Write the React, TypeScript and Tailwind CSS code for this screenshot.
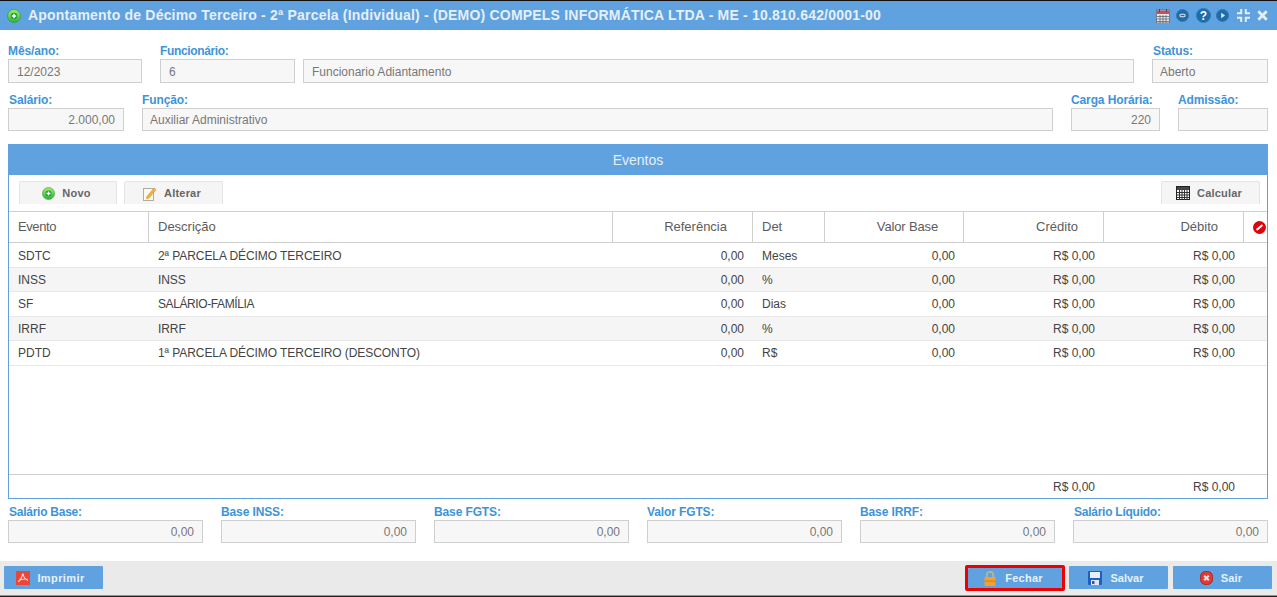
import type { ReactNode } from "react";

const rows = [
  ["SDTC", "2ª PARCELA DÉCIMO TERCEIRO", "0,00", "Meses", "0,00", "R$ 0,00", "R$ 0,00"],
  ["INSS", "INSS", "0,00", "%", "0,00", "R$ 0,00", "R$ 0,00"],
  ["SF", "SALÁRIO-FAMÍLIA", "0,00", "Dias", "0,00", "R$ 0,00", "R$ 0,00"],
  ["IRRF", "IRRF", "0,00", "%", "0,00", "R$ 0,00", "R$ 0,00"],
  ["PDTD", "1ª PARCELA DÉCIMO TERCEIRO (DESCONTO)", "0,00", "R$", "0,00", "R$ 0,00", "R$ 0,00"],
];

const bases = ["Salário Base:", "Base INSS:", "Base FGTS:", "Valor FGTS:", "Base IRRF:", "Salário Líquido:"];

function GreenPlus({ id, size = 14 }: { id: string; size?: number }) {
  return (
    <svg width={size} height={size} viewBox="0 0 14 14" className="shrink-0">
      <defs>
        <linearGradient id={id} x1="0" y1="0" x2="0" y2="1">
          <stop offset="0%" stopColor="#a4ec6c" />
          <stop offset="100%" stopColor="#2cb534" />
        </linearGradient>
      </defs>
      <circle cx="7" cy="7" r="6.5" fill={`url(#${id})`} stroke="#2b9a30" strokeWidth="0.6" />
      <circle cx="7" cy="7" r="3.200" fill="#149a3c" />
      <path d="M7 4.800v4.400M4.800 7h4.400" stroke="#fff" strokeWidth="1.500" />
    </svg>
  );
}

function Calendar() {
  return (
    <svg width="14" height="14" viewBox="0 0 14 14" className="shrink-0">
      <rect x="0.500" y="1" width="13" height="13" fill="#e8e8e8" stroke="#5a5f66" strokeWidth="0.700" />
      <rect x="1" y="1.500" width="12" height="3.500" fill="#bd5166" />
      <path d="M3.500 0v3M10.500 0v3" stroke="#4a4a4a" />
      <path d="M1 7.500h12M1 10h12M1 12.500h12M4 6v8M7 6v8M10 6v8" stroke="#5d6772" strokeWidth="0.800" />
    </svg>
  );
}

function RoundIcon({ size, children }: { size: number; children: ReactNode }) {
  return (
    <svg width={size} height={size} viewBox="0 0 15 15" className="shrink-0">
      <circle cx="7.5" cy="7.5" r="7" fill="#1f6ca8" stroke="#2a7cb8" />
      {children}
    </svg>
  );
}

function Pdf() {
  return (
    <svg width="14" height="14" viewBox="0 0 14 14" className="shrink-0">
      <rect width="14" height="14" fill="#e8473a" />
      <path d="M7 2.500c-.6 2.500-2.200 6-4.700 8.500M7 2.500c.4 3 2.300 6 5 7M3 9.500c2.500-1.300 5.500-1.800 8.500-1.300" fill="none" stroke="#fbd9d5" strokeWidth="1.100" />
    </svg>
  );
}

function Lock() {
  return (
    <svg width="12" height="15" viewBox="0 0 12 15" className="shrink-0">
      <path d="M2.800 7V4a3.200 3.200 0 0 1 6.400 0v3" fill="none" stroke="#b8b58e" strokeWidth="1.800" />
      <rect x="0.500" y="6" width="11" height="9" fill="#f2a02e" />
      <rect x="0.500" y="9.500" width="11" height="1.500" fill="#e08a1c" />
    </svg>
  );
}

function Floppy() {
  return (
    <svg width="14" height="14" viewBox="0 0 14 14" className="shrink-0">
      <rect width="14" height="14" rx="1" fill="#1f5fc0" />
      <rect x="2" y="1" width="10" height="6" fill="#e9eff8" />
      <rect x="3" y="9" width="8" height="5" fill="#dfe7f2" />
      <rect x="4" y="10" width="2.500" height="3" fill="#1f5fc0" />
    </svg>
  );
}

function RedClose() {
  return (
    <svg width="13" height="14" viewBox="0 0 13 14" className="shrink-0">
      <rect x="0.500" y="0.500" width="12" height="13" rx="5" fill="#de3a36" stroke="#a92a26" />
      <path d="M4.200 4.700l4.600 4.600M8.800 4.700l-4.600 4.600" stroke="#fbe3e2" strokeWidth="2" />
    </svg>
  );
}

function Pencil() {
  return (
    <svg width="14" height="15" viewBox="0 0 14 15" className="shrink-0">
      <rect x="0.500" y="2.500" width="10" height="12" fill="#fbf8ef" stroke="#b0aca0" />
      <path d="M4 10.500L11 2l2 1.700L6 12l-2.500.8z" fill="#f0b23c" stroke="#c98a1e" strokeWidth="0.500" />
    </svg>
  );
}

function Calc() {
  return (
    <svg width="14" height="14" viewBox="0 0 14 14" className="shrink-0">
      <rect x="0.500" y="0.500" width="13" height="13" fill="#fff" stroke="#222" />
      <rect x="1" y="1" width="12" height="3" fill="#444" />
      <path d="M1 6.500h12M1 9h12M1 11.500h12M3.500 4v10M6 4v10M8.500 4v10M11 4v10" stroke="#333" strokeWidth="1" />
    </svg>
  );
}

type FieldProps = {
  label?: string;
  labelClass?: string;
  value: string;
  right?: boolean;
  className?: string;
  boxClass?: string;
};

function Field({ label, labelClass = "", value, right, className, boxClass = "h-[23px] leading-[22px] px-[8px]" }: FieldProps) {
  return (
    <div className={className}>
      <div className={`h-[15px] text-[12px] leading-[15px] font-bold tracking-[-0.12px] text-[#3d94d8] whitespace-nowrap ${labelClass}`}>
        {label ?? "\u00a0"}
      </div>
      <div className={`border border-[#cfcfcf] bg-[#f7f7f7] text-[12px] text-[#777] ${right ? "text-right" : ""} ${boxClass}`}>
        {value}
      </div>
    </div>
  );
}

function ToolButton({ icon, label, className }: { icon: ReactNode; label: string; className: string }) {
  return (
    <button className={`h-[23px] flex items-center justify-center gap-[7px] pr-[3px] bg-[#f5f5f5] border border-b-0 border-[#e4e4e4] rounded-t-[2px] text-[11px] font-bold tracking-[0.2px] text-[#666] ${className}`}>
      {icon}
      {label}
    </button>
  );
}

function FootButton({ icon, label, className }: { icon: ReactNode; label: string; className: string }) {
  return (
    <button className={`flex items-center justify-center gap-[7px] bg-[#5fa2df] rounded-[1px] text-[11px] font-bold text-[#e8f1fa] ${className}`}>
      {icon}
      <span>{label}</span>
    </button>
  );
}

const cols = "grid grid-cols-[140px_464px_140px_72px_139px_140px_140px_23px]";
const row1Box = "h-[24px] leading-[24px] px-[8px]";

export default function App() {
  return (
    <div className="w-[1277px] h-[597px] overflow-hidden flex flex-col bg-white font-['Liberation_Sans',Arial,sans-serif] border-t border-[#111]">
      <header className="h-[29px] shrink-0 bg-[#5fa2df] flex items-center pl-[7px] pr-[9px]">
        <GreenPlus id="gp-title" />
        <h1 className="ml-[7px] text-[14px] font-bold tracking-[0.2px] text-[#e6eff8] whitespace-nowrap">
          Apontamento de Décimo Terceiro - 2ª Parcela (Individual) - (DEMO) COMPELS INFORMÁTICA LTDA - ME - 10.810.642/0001-00
        </h1>
        <div className="ml-auto flex items-center">
          <Calendar />
          <div className="ml-[6px]">
            <RoundIcon size={13}><rect x="4.500" y="6" width="6" height="3" rx="1.500" fill="none" stroke="#dfeaf5" strokeWidth="1.200" /></RoundIcon>
          </div>
          <div className="ml-[7px]">
            <RoundIcon size={15}><text x="7.500" y="11.800" textAnchor="middle" fontSize="12" fontWeight="700" fill="#fff">?</text></RoundIcon>
          </div>
          <div className="ml-[5px]">
            <RoundIcon size={13}><path d="M6 4.200l4.500 3.300-4.500 3.300z" fill="#dfeaf5" /></RoundIcon>
          </div>
          <svg width="13" height="13" viewBox="0 0 13 13" className="ml-[8px] shrink-0">
            <path d="M4.200 0v4.200H0M8.800 0v4.200H13M4.200 13V8.800H0M8.800 13V8.800H13" fill="none" stroke="#e6eff8" strokeWidth="2" />
          </svg>
          <svg width="11" height="11" viewBox="0 0 11 11" className="ml-[7px] shrink-0">
            <path d="M1.300 1.300l8.400 8.400M9.700 1.300l-8.400 8.400" stroke="#e6eff8" strokeWidth="2.800" />
          </svg>
        </div>
      </header>

      <main className="flex-1 flex flex-col pl-[8px] pr-[9px] pt-[14px]">
        <div className="flex">
          <Field label="Mês/ano:" value="12/2023" boxClass={row1Box} className="w-[134px] mr-[18px]" />
          <Field label="Funcionário:" labelClass="tracking-[-0.35px]" value="6" boxClass={row1Box} className="w-[135px] mr-[8px]" />
          <Field value="Funcionario Adiantamento" boxClass={row1Box} className="w-[831px] mr-[18px]" />
          <Field label="Status:" labelClass="pl-px" value="Aberto" boxClass="h-[24px] leading-[24px] pl-[7px] pr-[8px]" className="w-[116px]" />
        </div>
        <div className="flex mt-[10px]">
          <Field label="Salário:" labelClass="pl-px" value="2.000,00" right className="w-[116px] mr-[18px]" />
          <Field label="Função:" labelClass="tracking-[-0.4px]" value="Auxiliar Administrativo" boxClass="h-[23px] leading-[22px] pl-[7px] pr-[8px]" className="w-[911px] mr-[18px]" />
          <Field label="Carga Horária:" value="220" right className="w-[89px] mr-[18px]" />
          <Field label="Admissão:" value="" className="w-[90px]" />
        </div>

        <section className="mt-[13px] h-[355px] shrink-0 border border-t-0 border-[#5fa2df] flex flex-col">
          <div className="h-[31px] shrink-0 -mx-px bg-[#5fa2df] text-center text-[14px] leading-[33px] text-[#e6eff8]">Eventos</div>
          <div className="h-[36px] shrink-0 flex items-end justify-between pl-[10px] pr-[7px] pb-[7px]">
            <div className="flex gap-[7px]">
              <ToolButton icon={<GreenPlus id="gp-novo" size={13} />} label="Novo" className="w-[98px]" />
              <ToolButton icon={<Pencil />} label="Alterar" className="w-[99px]" />
            </div>
            <ToolButton icon={<Calc />} label="Calcular" className="w-[99px]" />
          </div>

          <div className={`${cols} h-[32px] shrink-0 border-y border-[#cfcfcf] text-[13px] text-[#5c5c5c] leading-[30px]`}>
            <div className="pl-[9px] tracking-[-0.4px] border-r border-[#cfcfcf]">Evento</div>
            <div className="pl-[9px] border-r border-[#cfcfcf]">Descrição</div>
            <div className="pr-[25px] text-right border-r border-[#cfcfcf]">Referência</div>
            <div className="pl-[9px] border-r border-[#cfcfcf]">Det</div>
            <div className="pr-[25px] text-right tracking-[-0.15px] border-r border-[#cfcfcf]">Valor Base</div>
            <div className="pr-[25px] text-right border-r border-[#cfcfcf]">Crédito</div>
            <div className="pr-[25px] text-right border-r border-[#cfcfcf]">Débito</div>
            <div className="flex items-center justify-end pr-[1px]">
              <svg width="13" height="13" viewBox="0 0 13 13">
                <circle cx="6.500" cy="6.500" r="6.500" fill="#d8060c" />
                <path d="M3.500 9L9.500 4" stroke="#fff" strokeWidth="2.200" />
              </svg>
            </div>
          </div>

          <div className="flex-1 pt-[0.6px]">
            {rows.map((r, i) => (
              <div key={r[0]} className={`${cols} h-[24.4px] border-b border-[#e8e8e8] text-[12px] leading-[25px] text-[#444] ${i % 2 === 1 ? "bg-[#f5f5f5]" : ""}`}>
                <div className="pl-[9px]">{r[0]}</div>
                <div className={`pl-[9px] ${r[0] === "SF" ? "tracking-[-0.4px]" : "tracking-[-0.07px]"}`}>{r[1]}</div>
                <div className="pr-[9px] text-right">{r[2]}</div>
                <div className="pl-[9px]">{r[3]}</div>
                <div className="pr-[9px] text-right">{r[4]}</div>
                <div className="pr-[9px] text-right">{r[5]}</div>
                <div className="pr-[9px] text-right">{r[6]}</div>
                <div />
              </div>
            ))}
          </div>

          <div className={`${cols} h-[24px] shrink-0 border-t border-[#cfcfcf] text-[12px] leading-[25px] text-[#444]`}>
            <div className="col-start-6 pr-[9px] text-right">R$ 0,00</div>
            <div className="pr-[9px] text-right">R$ 0,00</div>
          </div>
        </section>

        <div className="grid grid-cols-6 gap-x-[18px] mt-[6px]">
          {bases.map((b) => (
            <Field key={b} label={b} labelClass={b.startsWith("Salário") ? "pl-px tracking-[-0.25px]" : ""} value="0,00" right />
          ))}
        </div>
      </main>

      <footer className="h-[35px] shrink-0 bg-[#eaeaea] border-b border-[#5fa2df] flex items-center pl-[4px] pr-[5px] pb-[1px]">
        <FootButton icon={<Pdf />} label="Imprimir" className="h-[23px] w-[99px] pt-px pr-[6px] tracking-[0.4px]" />
        <div className="ml-auto flex items-center">
          <div className="mt-[1px] mr-[4px] border-[3px] border-[#ee0000] rounded-[2px]">
            <FootButton icon={<Lock />} label="Fechar" className="h-[20px] w-[94px] gap-[9px] pr-[3px] tracking-[0.25px]" />
          </div>
          <FootButton icon={<Floppy />} label="Salvar" className="h-[23px] w-[99px] mr-[5px] pt-px pr-[5px] gap-[8px]" />
          <FootButton icon={<RedClose />} label="Sair" className="h-[23px] w-[99px] pt-px pr-[3px] gap-[8px] tracking-[0.2px]" />
        </div>
      </footer>
      <div className="h-px shrink-0 bg-[#222]" />
    </div>
  );
}
